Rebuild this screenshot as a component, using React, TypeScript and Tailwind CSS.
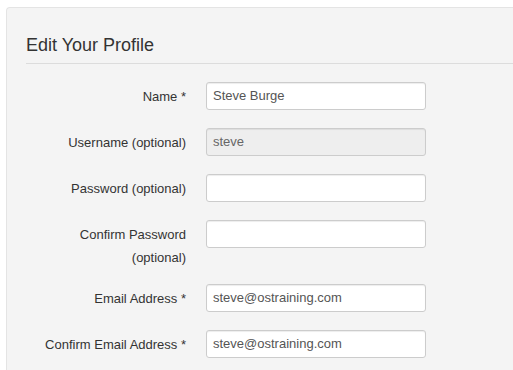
const rows: { label: string[]; value: string; disabled?: boolean }[] = [
  { label: ["Name *"], value: "Steve Burge" },
  { label: ["Username (optional)"], value: "steve", disabled: true },
  { label: ["Password (optional)"], value: "" },
  { label: ["Confirm Password", "(optional)"], value: "" },
  { label: ["Email Address *"], value: "steve@ostraining.com" },
  { label: ["Confirm Email Address *"], value: "steve@ostraining.com" },
];

export default function App() {
  return (
    <div
      className="w-[513px] h-[370px] overflow-hidden bg-white pl-[6px] pt-[7px]"
      style={{ fontFamily: '"Liberation Sans", Arial, sans-serif' }}
    >
      <div className="h-[400px] bg-[#f4f4f4] border-l border-t border-[#e4e4e4] rounded-tl-[4px] pl-[19px] pt-[25px]">
        <h2 className="text-[18px] leading-[24px] text-[#333] font-normal">Edit Your Profile</h2>
        <div className="mt-[6px] mb-[18px] h-px bg-[#dcdcdc]" />
        {rows.map((r) => (
          <div
            key={r.label.join(" ")}
            className={"flex items-start gap-[20px] " + (r.label.length > 1 ? "mb-[15px]" : "mb-[18px]")}
          >
            <div className="w-[160px] shrink-0 text-right text-[13px] leading-[23px] pt-[3px] text-[#333]">
              {r.label.map((l) => (
                <div key={l}>{l}</div>
              ))}
            </div>
            <div
              className={
                "w-[220px] h-[28px] rounded-[3px] border border-[#cccccc] px-[6px] text-[13px] leading-[26px] shadow-[inset_0_1px_1px_rgba(0,0,0,0.075)] " +
                (r.disabled ? "bg-[#eeeeee] text-[#666]" : "bg-white text-[#555]")
              }
            >
              {r.value}
            </div>
          </div>
        ))}
      </div>
    </div>
  );
}
